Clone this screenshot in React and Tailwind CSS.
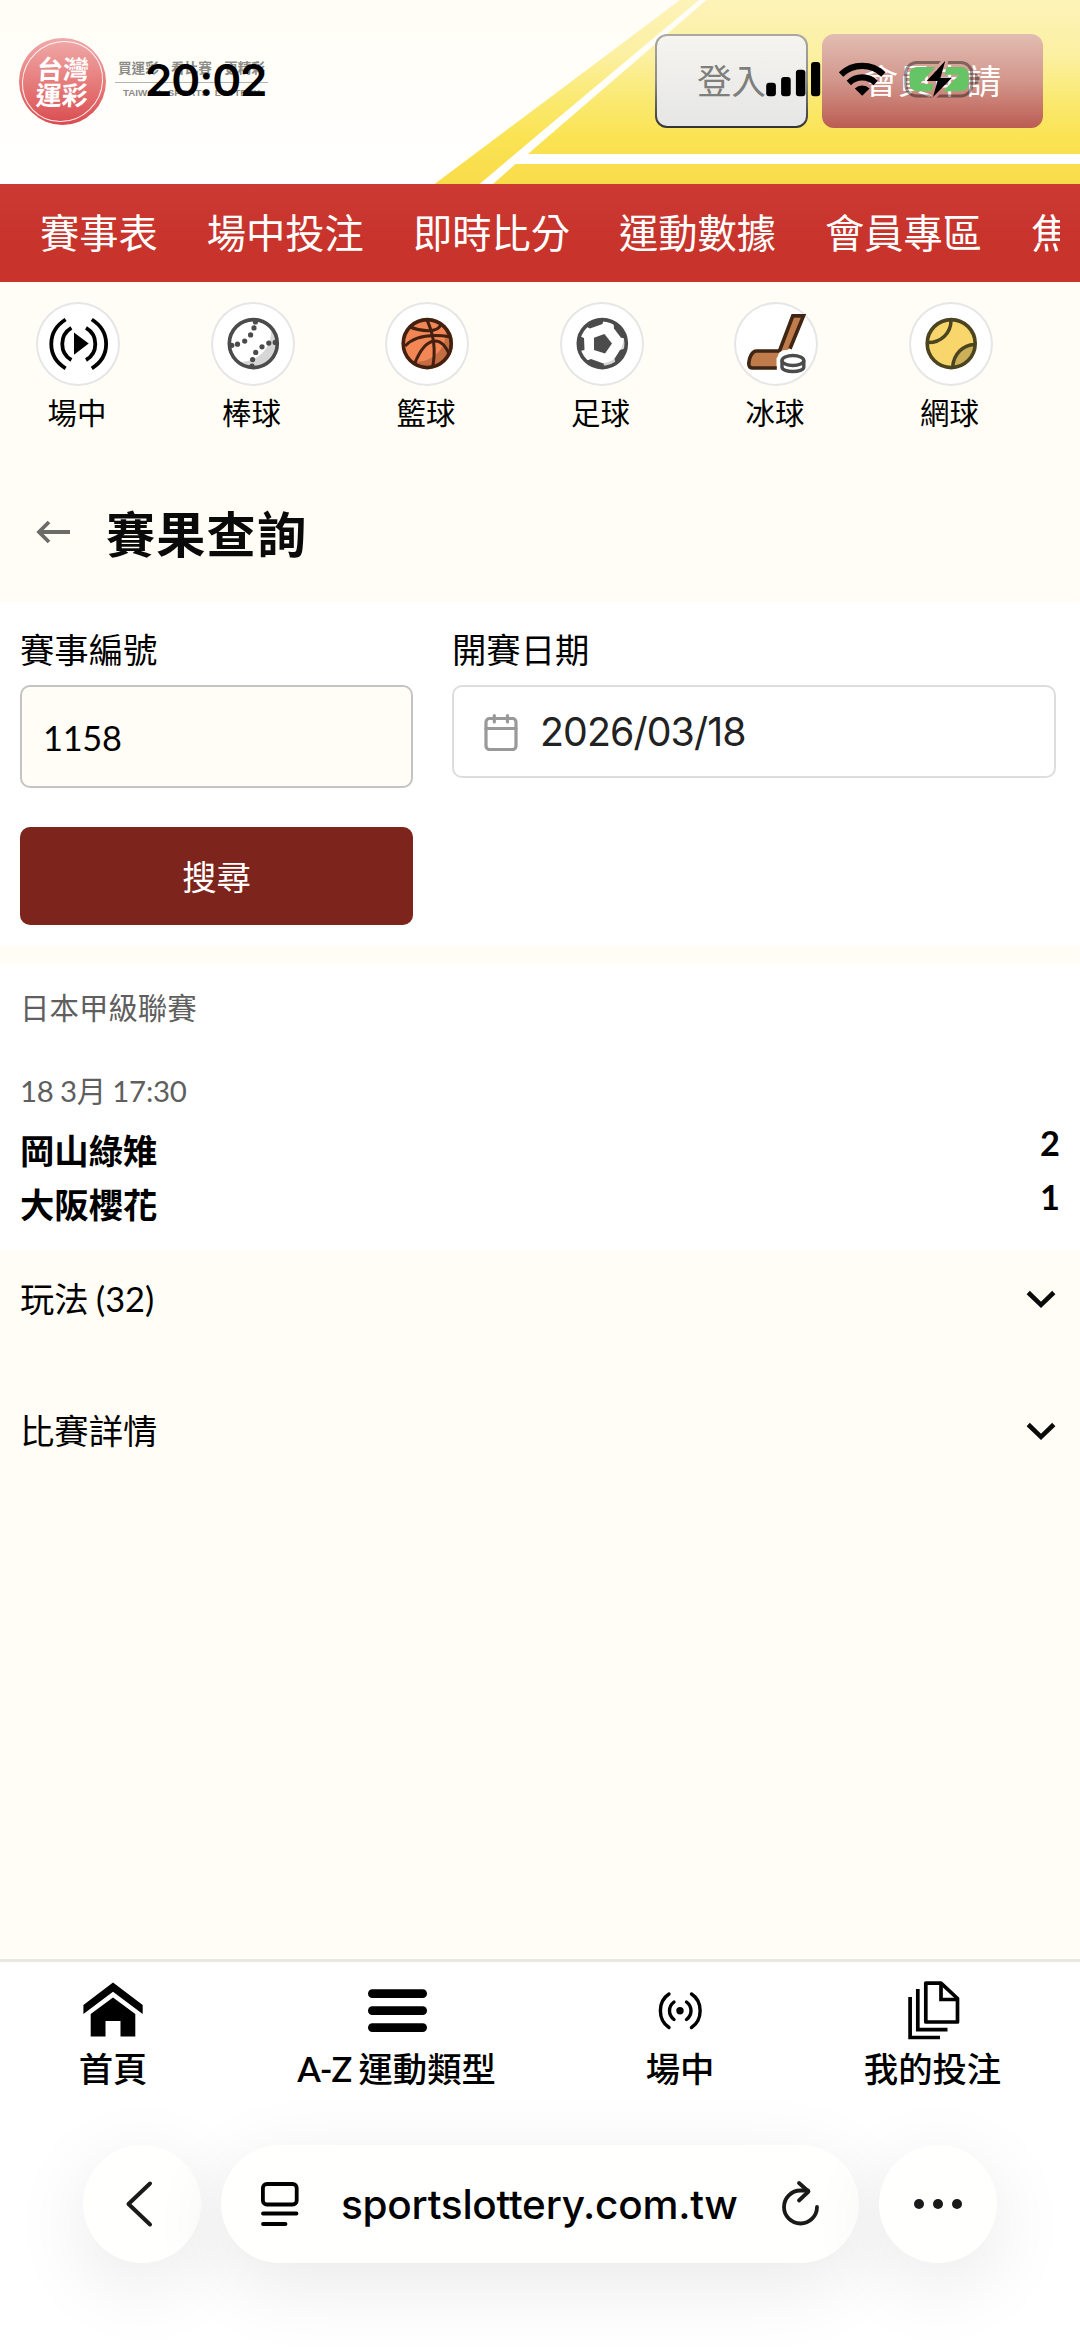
import React from 'react';

const navItems = ['賽事表', '場中投注', '即時比分', '運動數據', '會員專區', '焦點賽事'];

// Every sport icon is drawn on the same 84px disc.
const LiveIcon = () => (
  <g>
    <g fill="none" stroke="#000" strokeWidth="3.8">
      <path d="M29.6 17.5C10.5 29.5 10.5 54.5 29.6 66.3" />
      <path d="M35.4 25.8C23.2 33 23.2 50.8 35.4 58" />
      <path d="M55.8 17.5C74.9 29.5 74.9 54.5 55.8 66.3" />
      <path d="M50 25.8C62.4 33 62.4 50.8 50 58" />
    </g>
    <path d="M38 30.6L52.7 41.6L38 52.8Z" />
  </g>
);

const baseballStitches = [
  [44.4, 19.9], [43, 25.9], [39.6, 32.9], [33.7, 39.1], [26.5, 42.2], [20.8, 43.3],
  [41, 64], [41.6, 57.6], [44.7, 50.4], [51, 44.8], [57.8, 41.1], [64.2, 40.4],
];

const BaseballIcon = () => (
  <g>
    <circle cx="42.3" cy="41.6" r="24" fill="#fff" />
    <path d="M60 25C62 42 51 60 27 60A24 24 0 0 0 60 25Z" fill="#d6d6d6" />
    <circle cx="42.3" cy="41.6" r="24" fill="none" stroke="#4b4b4b" strokeWidth="3.6" />
    {baseballStitches.map(([cx, cy]) => <circle key={`${cx}-${cy}`} cx={cx} cy={cy} r="2.6" fill="#4b4b4b" />)}
  </g>
);

const BasketballIcon = () => (
  <g>
    <circle cx="42.2" cy="41.6" r="24" fill="#f28654" />
    <path d="M60 24C64 42 52 61 28 60A24 24 0 0 0 60 24Z" fill="#c46d43" />
    <g fill="none" stroke="#43200f" strokeWidth="3">
      <path d="M42 18C48 31 51.5 46 47.6 65" />
      <path d="M25 25C36 29.5 53 31 55.5 23" />
      <path d="M20 44C30 33.5 48 32 66 35" />
      <path d="M29.5 62C35 48 42 40 49 39C57 38.5 61 45 64.5 53" />
      <circle cx="42.2" cy="41.6" r="24" strokeWidth="3.6" />
    </g>
  </g>
);

const SoccerIcon = () => (
  <g>
    <circle cx="42.3" cy="41.6" r="24" fill="#fff" />
    <path d="M64 35C62 50 56 60 43 61L43 65A24 24 0 0 0 65 35Z" fill="#d6d6d6" />
    <path d="M58 36C58 48 53 57 43 60L30 56L30 28Z" fill="#fff" />
    <g fill="#4b4b4b">
      <path d="M34 35.7L44.4 32L52 41.5L45 51.5L34 48Z" />
      <path d="M43.5 18L42.5 22L30 26.5L26 24.5L30 19Z" />
      <path d="M53.5 20L54 26.5L61 35.7L66 36.5L62 25Z" />
      <path d="M65 46.500L60 48L54.7 56.5L55.4 61.5L62 56Z" />
      <path d="M44 64L43.5 61.5L31 57L27 58.5L33 64Z" />
      <path d="M20 34.5L24 36L24.5 48L20 49L18 42Z" />
    </g>
    <circle cx="42.3" cy="41.6" r="24" fill="none" stroke="#4b4b4b" strokeWidth="3.6" />
  </g>
);

const HockeyIcon = () => (
  <g>
    <path d="M59 14L45.5 48.5H22C18 48.5 15 56 14.6 61C14.5 65 16 66.3 19 66.3H42.5V56L56 46L69.5 14Z" fill="#bf7c4a" />
    <path d="M56 46.8L69.5 13.9H58.8L45.5 49H22.5C18 49 15 56 14.8 61C14.7 65 16 66 19 66H42.8" fill="none" stroke="#3f2514" strokeWidth="3.6" />
    <rect x="43.5" y="48" width="28" height="24" rx="8" fill="#fff" />
    <g fill="none" stroke="#4b4b4b" strokeWidth="3.4">
      <ellipse cx="58.9" cy="58.5" rx="10.9" ry="5" />
      <path d="M48 58.5V65C48 71 69.8 71 69.8 65V58.5" />
    </g>
  </g>
);

const TennisIcon = () => (
  <g>
    <circle cx="42.2" cy="41.6" r="24" fill="#f9d66b" />
    <path d="M65 42C54 43 45 52 43.7 65A24 24 0 0 0 65 42Z" fill="#ccb058" />
    <g fill="none" stroke="#4a4420" strokeWidth="3.5">
      <path d="M42 18.5C42 31 32 40.5 19.5 40.5" />
      <path d="M43.7 65C44.5 52 54 43 65.5 42.5" />
      <circle cx="42.2" cy="41.6" r="24" strokeWidth="3.6" />
    </g>
  </g>
);

const sports = [
  { label: '場中', Icon: LiveIcon },
  { label: '棒球', Icon: BaseballIcon },
  { label: '籃球', Icon: BasketballIcon },
  { label: '足球', Icon: SoccerIcon },
  { label: '冰球', Icon: HockeyIcon },
  { label: '網球', Icon: TennisIcon },
];

const BOLT = 'M945.3 60.8L926.7 81H937.5L933 97L952 77.7H940.5Z';

// Clock and system icons float over the page header.
const StatusBar = () => (
  <div className="absolute inset-0">
    <span className="absolute left-[145px] top-[54px] font-[Inter] text-[44px] leading-[52px] font-semibold tracking-[-1.1px] text-black">20:02</span>
    <svg className="absolute left-[766px] top-[60px]" width="216" height="40" viewBox="766 60 216 40">
      <mask id="bolt-gap" maskUnits="userSpaceOnUse" x="900" y="55" width="90" height="50">
        <rect x="900" y="55" width="90" height="50" fill="#fff" />
        <path d={BOLT} fill="#000" stroke="#000" strokeWidth="6" />
      </mask>
      <rect x="766.2" y="82.7" width="9.7" height="13.5" rx="3" />
      <rect x="781.1" y="77" width="9.6" height="19.2" rx="3" />
      <rect x="795.9" y="69.7" width="9.5" height="26.5" rx="3" />
      <rect x="811" y="62" width="9.2" height="34.2" rx="3" />
      <g fill="none" stroke="#000" strokeWidth="6.2">
        <path d="M841 74.5A30.5 30.5 0 0 1 883.4 74.5" />
        <path d="M848.8 83A19 19 0 0 1 875.6 83" />
      </g>
      <path d="M862.2 95.8L854.8 88.6A10.5 10.5 0 0 1 869.6 88.6Z" />
      <g mask="url(#bolt-gap)">
        <rect x="905.8" y="62.5" width="66" height="33.5" rx="11" fill="none" stroke="#000" strokeOpacity="0.4" strokeWidth="3" />
        <rect x="909.5" y="67" width="59.2" height="24.2" rx="7.5" fill="#65c466" />
      </g>
      <path d="M975 73.5C981 75 981 83 975 84.7Z" fillOpacity="0.4" />
      <path d={BOLT} />
    </svg>
  </div>
);

const Logo = () => (
  <div className="flex items-center gap-[9px]">
    <div className="relative size-[87px] rounded-full bg-linear-to-b from-[#efaaaa] to-[#da4a50] p-[3px]">
      <div className="flex size-full -skew-x-3 flex-col items-center justify-center rounded-full border-[1.5px] border-white/90 pt-px text-[26px] leading-[26px] font-bold text-white">
        <span>台灣</span>
        <span>運彩</span>
      </div>
    </div>
    <div className="flex w-[153px] flex-col items-center font-bold text-[#8c8c89]">
      <div className="flex h-[22px] w-full justify-between px-[3px] text-[13.6px] leading-[16px]">
        <span>買運彩</span>
        <span>看比賽</span>
        <span>更精彩</span>
      </div>
      <div className="h-px w-full bg-[#b4b4b1]" />
      <div className="h-[20px] pt-[4px] font-['Liberation_Sans'] text-[9.8px] leading-[12px] whitespace-nowrap [word-spacing:4px]">TAIWAN SPORTS LOTTERY</div>
    </div>
  </div>
);

const Header = () => (
  <header className="relative h-[184px] overflow-hidden bg-linear-to-b from-[#fffdf5] to-white">
    <svg className="absolute inset-0" width="1080" height="184" viewBox="0 0 1080 184">
      <defs>
        <linearGradient id="court" x1="0" y1="0" x2="0" y2="184" gradientUnits="userSpaceOnUse">
          <stop offset="0" stopColor="#fdf3b8" />
          <stop offset="0.3" stopColor="#fcf0a2" />
          <stop offset="0.55" stopColor="#fae96f" />
          <stop offset="0.75" stopColor="#fae353" />
          <stop offset="1" stopColor="#f9dc4a" />
        </linearGradient>
      </defs>
      <path d="M434.6 184L540 105L680 0H699L540 133L479.7 184Z" fill="url(#court)" />
      <path d="M528 154L540 143.5L706.5 0H1080V154ZM493 184L515.5 164H1080V184Z" fill="url(#court)" />
    </svg>
    <div className="relative flex h-[162px] items-center justify-between pr-[37px] pl-[19px]">
      <Logo />
      <div className="flex gap-[14px] text-[34.36px]">
        <div className="h-[94px] w-[153px] rounded-[12px] bg-linear-to-b from-[#aaa9a2] via-[#8d8d88] to-[#333] p-[2px]">
          <button type="button" className="size-full rounded-[10px] bg-linear-to-b from-[#f5f4ef] to-[#e6e6e6] text-[#7e7e7b]">登入</button>
        </div>
        <button type="button" className="h-[94px] w-[221px] rounded-[12px] bg-linear-to-b from-[#e2bdb2] via-[#d2968c] to-[#bb5c52] text-white">會員申請</button>
      </div>
    </div>
    <StatusBar />
  </header>
);

const Chevron = () => (
  <svg width="30" height="19" viewBox="0 0 30 19" fill="none" stroke="#0a0a0a" strokeWidth="4.6">
    <path d="M2.2 2.5L15 14.8L27.8 2.5" />
  </svg>
);

const SearchForm = () => (
  <form className="flex h-[343px] gap-[39px] bg-white px-[20px] pt-[25px] text-[34.36px]" onSubmit={(e) => e.preventDefault()}>
    <div className="w-[393px]">
      <label className="block h-[58px] leading-[46px]" htmlFor="event-no">賽事編號</label>
      <input
        id="event-no"
        defaultValue="1158"
        className="block h-[103px] w-full rounded-[10px] border-2 border-[#c4c4c4] bg-[#fffdf5] px-[21px] pt-px tracking-[-0.3px] outline-none"
      />
      <button type="submit" className="mt-[39px] block h-[98px] w-full rounded-[10px] bg-[#7d251c] pt-[2px] text-white">搜尋</button>
    </div>
    <div className="w-[604px]">
      <label className="block h-[58px] leading-[46px]">開賽日期</label>
      <div className="flex h-[93px] items-center rounded-[10px] border-2 border-[#ddd] bg-white pl-[30px]">
        <svg width="34" height="38" viewBox="0 0 34 38" fill="none" stroke="#999" strokeWidth="3.2" strokeLinecap="round">
          <rect x="2" y="5.5" width="30" height="31" rx="3.5" />
          <path d="M2 15.500H32M10.300 2.500V9M23.500 2.500V9" />
        </svg>
        <span className="ml-[22px] pt-[2px] font-[Inter] text-[39.27px] tracking-[-0.9px] text-[#222]">2026/03/18</span>
      </div>
    </div>
  </form>
);

const Team = ({ name, score }) => (
  <div className="flex h-[54px] items-start justify-between leading-[54px] font-bold">
    <span>{name}</span>
    <span className="-mt-[8px]">{score}</span>
  </div>
);

const MatchResult = () => (
  <section className="h-[286px] bg-white px-[20px] pt-[20px] text-[34.36px]">
    <div className="h-[84px] text-[29.45px] leading-[47px] text-[#5f5f5f]">日本甲級聯賽</div>
    <div className="h-[56px] text-[29.45px] leading-[46px] tracking-[-0.25px] text-[#5f5f5f] [word-spacing:-1px]">18 3月 17:30</div>
    <Team name="岡山綠雉" score="2" />
    <Team name="大阪櫻花" score="1" />
  </section>
);

const Accordion = ({ title }) => (
  <div className="flex h-[132px] items-start justify-between pr-[24px] pl-[20px] text-[34.36px] leading-[50px]">
    <span className="[word-spacing:-1.5px]">{title}</span>
    <span className="flex h-[50px] items-center"><Chevron /></span>
  </div>
);

const tabs = [
  {
    label: '首頁',
    width: 'w-[226px]',
    icon: (
      <g>
        <path d="M2.4 33V24L32 1.500L61.700 24V33L32 10.800Z" />
        <path d="M9.7 33L32 16.500L54.300 33V55.500H39.500V40H24.500V55.500H9.700Z" />
      </g>
    ),
  },
  {
    label: '運動類型',
    prefix: 'A-Z',
    width: 'w-[341px]',
    icon: (
      <g>
        <rect x="3" y="8.3" width="59" height="8.7" rx="4.3" />
        <rect x="3" y="25.3" width="59" height="8.7" rx="4.3" />
        <rect x="3" y="42.2" width="59" height="8.7" rx="4.3" />
      </g>
    ),
  },
  {
    label: '場中',
    width: 'w-[226px]',
    icon: (
      <g fill="none" stroke="#000" strokeWidth="3.4" strokeLinecap="round">
        <circle cx="32" cy="29.7" r="3.7" fill="#000" stroke="none" />
        <path d="M21 13C9.500 20.500 9.500 39 21 46.500M26 21C20 25.500 20 34 26 38.500" />
        <path d="M43.500 13C55 20.500 55 39 43.500 46.500M38.500 21C44.500 25.500 44.500 34 38.500 38.500" />
      </g>
    ),
  },
  {
    label: '我的投注',
    width: 'w-[279px]',
    icon: (
      <g fill="none" stroke="#000" strokeWidth="3.7">
        <path d="M24.800 2.100H40L56.500 17.500V41H24.800Z" strokeLinejoin="round" />
        <path d="M40 2V18.500H56.500" />
        <path d="M16.800 8V48.700H46.500M9.100 16V56.500H39" />
      </g>
    ),
  },
];

const BottomTabs = () => (
  <nav className="flex h-[138px] border-t-[3px] border-[#e9e8e5]">
    {tabs.map((tab) => (
      <div key={tab.label} className={`${tab.width} flex shrink-0 flex-col items-center pt-[19px]`}>
        <svg width="64" height="60" viewBox="0 0 64 60">{tab.icon}</svg>
        <span className="mt-[5px] text-[34.36px] leading-[46px] font-medium whitespace-nowrap">
          {tab.prefix && <span className="mr-[7px] font-semibold tracking-[-0.9px]">{tab.prefix}</span>}
          {tab.label}
        </span>
      </div>
    ))}
  </nav>
);

const BrowserBar = () => (
  <div className="mt-[48px] flex items-center gap-[20px] pl-[83px]">
    <button type="button" className="flex size-[118px] items-center justify-center rounded-full bg-[#fffffe] pr-[7px] shadow-[0_20px_80px_rgba(0,0,0,0.09)]">
      <svg width="30" height="48" viewBox="0 0 30 48" fill="none" stroke="#1a1a1a" strokeWidth="4" strokeLinecap="round" strokeLinejoin="round">
        <path d="M26 3.500L4.500 24L26 44.500" />
      </svg>
    </button>
    <div className="flex h-[118px] w-[638px] items-center rounded-full bg-[#fffffe] pr-[37px] pl-[39px] shadow-[0_20px_80px_rgba(0,0,0,0.09)]">
      <svg width="40" height="48" viewBox="0 0 40 48" fill="none" stroke="#000" strokeWidth="3.8" strokeLinecap="round">
        <rect x="2.9" y="4" width="33.8" height="20.5" rx="4" />
        <path d="M3 33.500H36.500M3 44H25.500" />
      </svg>
      <span className="ml-[41px] w-[400px] pt-[2px] font-[Inter] text-[40.5px] font-medium tracking-[-0.25px]">sportslottery.com.tw</span>
      <svg className="ml-auto" width="42" height="48" viewBox="0 0 42 48" fill="none" stroke="#1a1a1a" strokeWidth="3.8" strokeLinecap="round" strokeLinejoin="round">
        <path d="M37 27A16.500 16.500 0 1 1 20.500 10.500H28" />
        <path d="M19 3L28.500 11.500L19 20.500" />
      </svg>
    </div>
    <button type="button" className="flex size-[118px] items-center justify-center gap-[9px] rounded-full bg-[#fffffe] shadow-[0_20px_80px_rgba(0,0,0,0.09)]">
      <span className="size-[10px] rounded-full bg-[#1a1a1a]" />
      <span className="size-[10px] rounded-full bg-[#1a1a1a]" />
      <span className="size-[10px] rounded-full bg-[#1a1a1a]" />
    </button>
  </div>
);

const App = () => (
  <div className="flex h-[2347px] w-[1080px] flex-col overflow-hidden bg-[#fffdf5] font-[Lato,'Noto_Sans_CJK_TC',sans-serif] text-black">
    <Header />

    <nav className="h-[98px] bg-linear-to-b from-[#cb3a33] to-[#c8332b] to-60% px-[20px] text-white">
      <div className="flex h-full items-center gap-[49px] overflow-hidden pl-[20px] text-[39.27px] whitespace-nowrap">
        {navItems.map((item) => <span key={item} className="shrink-0">{item}</span>)}
      </div>
    </nav>

    <div className="flex h-[204px] pt-[20px] pl-[28px]">
      {sports.map(({ label, Icon }) => (
        <div key={label} className="flex w-[174.5px] shrink-0 flex-col items-start">
          <div className="flex w-[100px] flex-col items-center">
            <div className="size-[84px] rounded-full bg-white ring-2 ring-[#e6e6e6] ring-inset">
              <svg width="84" height="84" viewBox="0 0 84 84"><Icon /></svg>
            </div>
            <span className="mt-[7px] mr-[2px] text-[29.45px] leading-[40px]">{label}</span>
          </div>
        </div>
      ))}
    </div>

    <div className="flex h-[116px] items-center pb-[23px] pl-[36px]">
      <svg width="34" height="26" viewBox="0 0 34 26" fill="none" stroke="#6b6b67" strokeWidth="3.8">
        <path d="M34 12H3M13 2L3 12L13 22" />
      </svg>
      <h1 className="ml-[36px] pt-[2px] text-[49.1px] leading-[60px] font-bold tracking-[1.2px] text-[#0a0a0a]">賽果查詢</h1>
    </div>

    <SearchForm />
    <div className="h-[19px]" />
    <MatchResult />

    <div className="h-[709px] pt-[24px]">
      <Accordion title="玩法 (32)" />
      <Accordion title="比賽詳情" />
    </div>

    <footer className="h-[388px] bg-white">
      <BottomTabs />
      <BrowserBar />
    </footer>
  </div>
);

export default App;
